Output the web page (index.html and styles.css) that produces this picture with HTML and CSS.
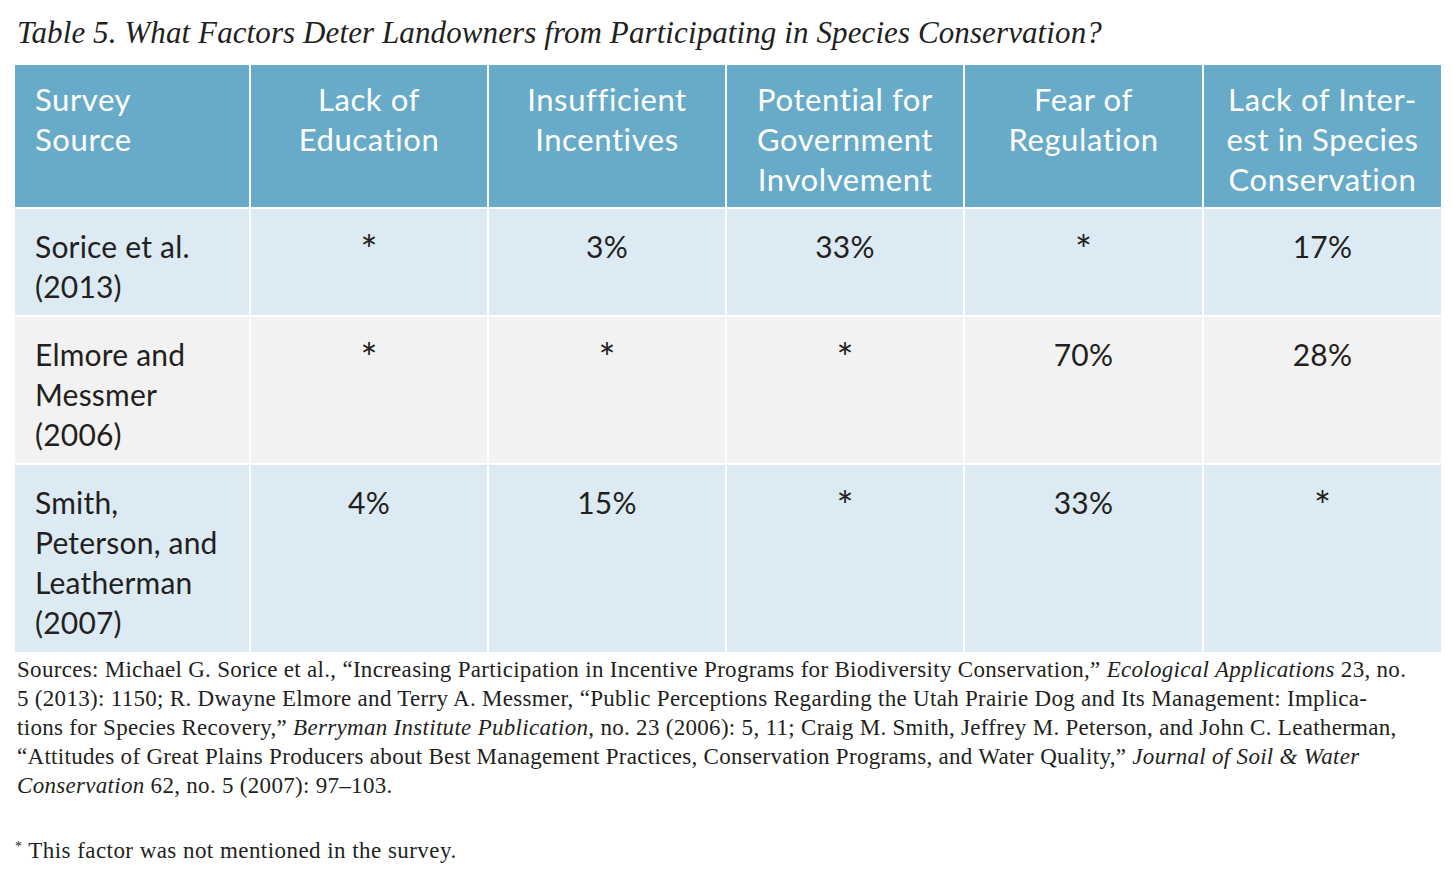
FILE: index.html
```html
<!DOCTYPE html>
<html>
<head>
<meta charset="utf-8">
<link rel="stylesheet" href="styles.css">
</head>
<body>
<div class="page">
  <h1 class="title">Table 5. What Factors Deter Landowners from Participating in Species Conservation?</h1>
  <div class="grid">
    <div class="cell head left">Survey<br>Source</div>
    <div class="cell head">Lack of<br>Education</div>
    <div class="cell head">Insufficient<br>Incentives</div>
    <div class="cell head">Potential for<br>Government<br>Involvement</div>
    <div class="cell head">Fear of<br>Regulation</div>
    <div class="cell head">Lack of Inter-<br>est in Species<br>Conservation</div>

    <div class="cell blue left">Sorice et al.<br>(2013)</div>
    <div class="cell blue"><span class="ast">*</span></div>
    <div class="cell blue">3%</div>
    <div class="cell blue">33%</div>
    <div class="cell blue"><span class="ast">*</span></div>
    <div class="cell blue">17%</div>

    <div class="cell grey left">Elmore and<br>Messmer<br>(2006)</div>
    <div class="cell grey"><span class="ast">*</span></div>
    <div class="cell grey"><span class="ast">*</span></div>
    <div class="cell grey"><span class="ast">*</span></div>
    <div class="cell grey">70%</div>
    <div class="cell grey">28%</div>

    <div class="cell blue left">Smith,<br>Peterson, and<br>Leatherman<br>(2007)</div>
    <div class="cell blue">4%</div>
    <div class="cell blue">15%</div>
    <div class="cell blue"><span class="ast">*</span></div>
    <div class="cell blue">33%</div>
    <div class="cell blue"><span class="ast">*</span></div>
  </div>
  <p class="sources">Sources: Michael G. Sorice et al., “Increasing Participation in Incentive Programs for Biodiversity Conservation,” <i>Ecological Applications</i> 23, no.<br>5 (2013): 1150; R. Dwayne Elmore and Terry A. Messmer, “Public Perceptions Regarding the Utah Prairie Dog and Its Management: Implica-<br>tions for Species Recovery,” <i>Berryman Institute Publication</i>, no. 23 (2006): 5, 11; Craig M. Smith, Jeffrey M. Peterson, and John C. Leatherman,<br>“Attitudes of Great Plains Producers about Best Management Practices, Conservation Programs, and Water Quality,” <i>Journal of Soil &amp; Water<br>Conservation</i> 62, no. 5 (2007): 97–103.</p>
  <p class="note"><sup>*</sup> This factor was not mentioned in the survey.</p>
</div>
</body>
</html>
```

FILE: styles.css
```css
html, body {
  margin: 0;
  padding: 0;
  background: #ffffff;
}
.page {
  padding: 14px 11px 0 15px;
  color: #231f20;
}
.title {
  margin: 0 0 0 2px;
  font-family: "Liberation Serif", serif;
  font-style: italic;
  font-weight: normal;
  font-size: 31px;
  letter-spacing: 0.1px;
  line-height: 38px;
  height: 51px;
  white-space: nowrap;
}
.grid {
  display: grid;
  grid-template-columns: 234px 236px 236px 236px 237px 237px;
  grid-template-rows: 142px 106px 146px 187px;
  gap: 2px;
  width: 1426px;
  background: #ffffff;
}
.cell {
  font-family: "Lato", sans-serif;
  font-size: 30px;
  letter-spacing: 0.2px;
  line-height: 40px;
  text-align: center;
  padding: 17px 4px 0 4px;
  color: #231f20;
  white-space: nowrap;
}
.cell.left {
  text-align: left;
  padding-left: 20px;
}
.ast {
  font-size: 40px;
  line-height: 40px;
  position: relative;
  top: 4px;
}
.head {
  background: #67abc9;
  color: #ffffff;
  padding-top: 14px;
  font-size: 31px;
  letter-spacing: 0.6px;
}
.blue {
  background: #dbeaf3;
}
.grey {
  background: #f2f2f2;
}
.sources {
  margin: 3px 0 0 2px;
  font-family: "Liberation Serif", serif;
  font-size: 23px;
  letter-spacing: 0.3px;
  line-height: 29px;
  white-space: nowrap;
}
.note {
  margin: 36px 0 0 0;
  font-family: "Liberation Serif", serif;
  font-size: 23px;
  letter-spacing: 0.45px;
  line-height: 29px;
}
.note sup {
  font-size: 14px;
  vertical-align: 7px;
  line-height: 0;
}
```
